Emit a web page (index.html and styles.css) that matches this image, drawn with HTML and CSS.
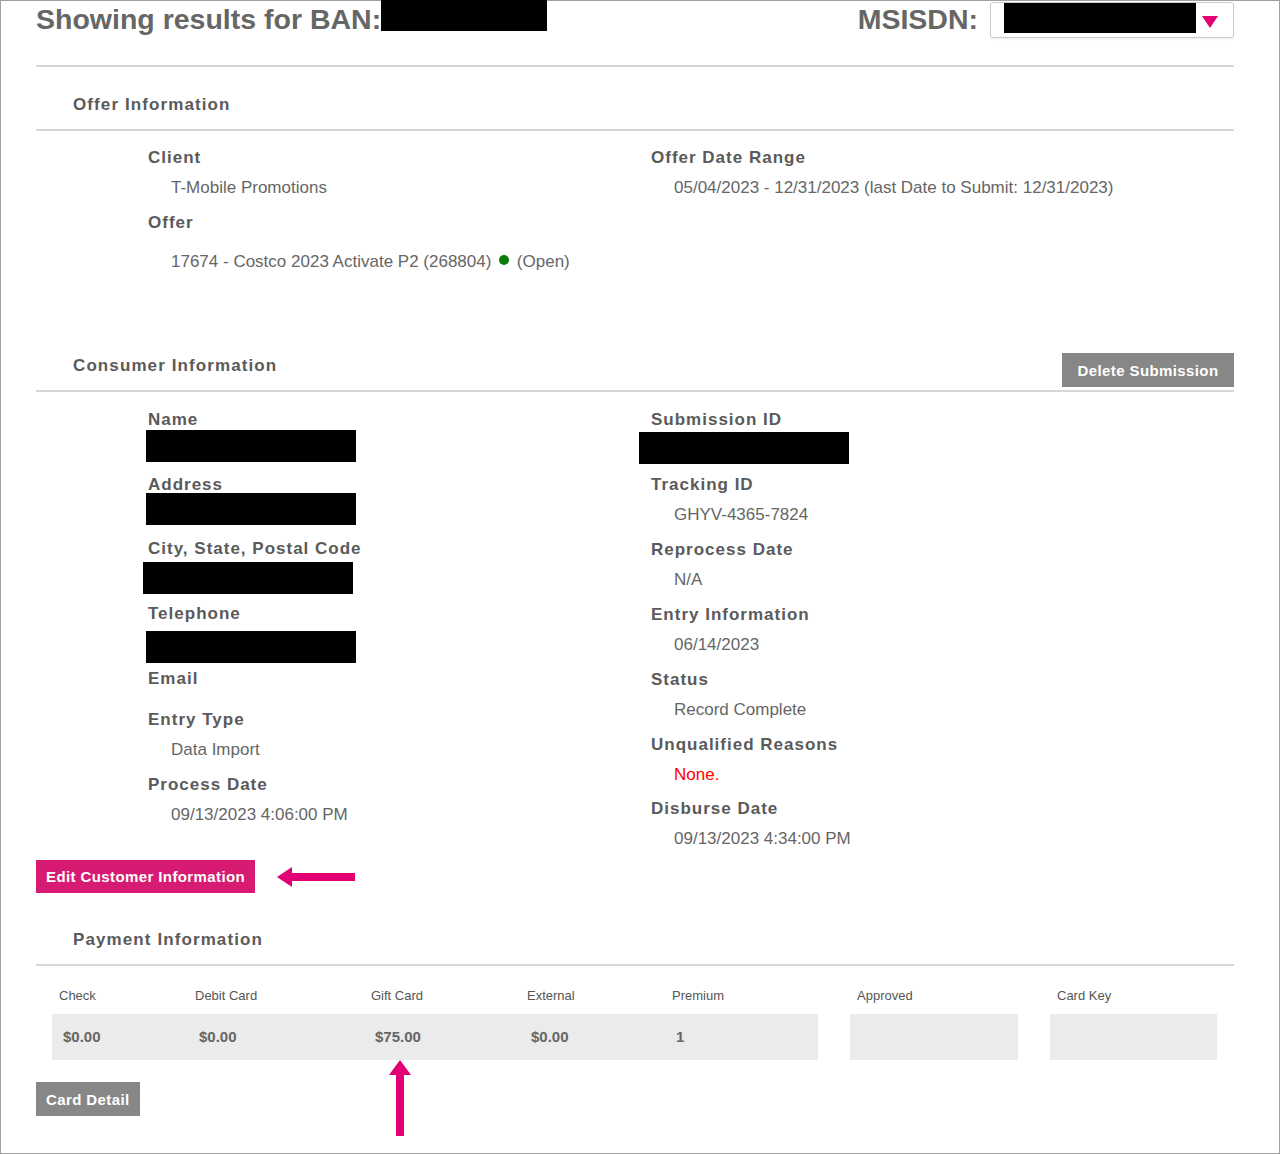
FILE: index.html
```html
<!DOCTYPE html>
<html lang="en">
<head>
    <meta charset="UTF-8">
    <meta name="viewport" content="width=device-width, initial-scale=1.0">
    <title>Submission Detail</title>
    <link rel="stylesheet" href="styles.css">
</head>
<body>

<div class="page">

    <div class="top">
        <div class="title">Showing results for BAN:<span class="redact redact-ban"></span></div>
        <div class="msisdn">
            MSISDN:
            <div class="select">
                <span class="redact redact-msisdn"></span>
                <svg class="caret" width="16" height="12" viewBox="0 0 16 12"><path d="M0 0 H16 L8 12 Z" fill="#e20074"/></svg>
            </div>
        </div>
    </div>

    <!-- Offer -->
    <div class="section-head">
        <div class="head-text">Offer Information</div>
    </div>
    <div class="fields offer-fields">
        <div class="col">
            <div class="field">
                <div class="label">Client</div>
                <div class="value">T-Mobile Promotions</div>
            </div>
            <div class="field">
                <div class="label">Offer</div>
                <div class="value value-tall">17674 - Costco 2023 Activate P2 (268804) <span class="dot"></span> (Open)</div>
            </div>
        </div>
        <div class="col">
            <div class="field">
                <div class="label">Offer Date Range</div>
                <div class="value">05/04/2023 - 12/31/2023 (last Date to Submit: 12/31/2023)</div>
            </div>
        </div>
    </div>

    <!-- Consumer -->
    <div class="section-head">
        <div class="head-text">Consumer Information</div>
        <button class="btn btn-gray btn-delete">Delete Submission</button>
    </div>
    <div class="fields consumer-fields">
        <div class="col">
            <div class="field">
                <div class="label">Name</div>
                <div class="redact redact-field"></div>
            </div>
            <div class="field">
                <div class="label">Address</div>
                <div class="redact redact-field redact-address"></div>
            </div>
            <div class="field">
                <div class="label">City, State, Postal Code</div>
                <div class="redact redact-field redact-city"></div>
            </div>
            <div class="field">
                <div class="label">Telephone</div>
                <div class="redact redact-field redact-phone"></div>
            </div>
            <div class="field field-empty">
                <div class="label">Email</div>
            </div>
            <div class="field">
                <div class="label">Entry Type</div>
                <div class="value">Data Import</div>
            </div>
            <div class="field">
                <div class="label">Process Date</div>
                <div class="value">09/13/2023 4:06:00 PM</div>
            </div>
        </div>
        <div class="col">
            <div class="field">
                <div class="label">Submission ID</div>
                <div class="redact redact-field redact-sub"></div>
            </div>
            <div class="field">
                <div class="label">Tracking ID</div>
                <div class="value">GHYV-4365-7824</div>
            </div>
            <div class="field">
                <div class="label">Reprocess Date</div>
                <div class="value">N/A</div>
            </div>
            <div class="field">
                <div class="label">Entry Information</div>
                <div class="value">06/14/2023</div>
            </div>
            <div class="field">
                <div class="label">Status</div>
                <div class="value">Record Complete</div>
            </div>
            <div class="field field-short">
                <div class="label">Unqualified Reasons</div>
                <div class="value value-red">None.</div>
            </div>
            <div class="field">
                <div class="label">Disburse Date</div>
                <div class="value">09/13/2023 4:34:00 PM</div>
            </div>
        </div>
    </div>

    <div class="edit-row">
        <button class="btn btn-pink">Edit Customer Information</button>
        <svg class="arrow-left" width="78" height="22" viewBox="0 0 78 22"><path d="M0 11 L15 1 V7 H78 V15 H15 V21 Z" fill="#e20074"/></svg>
    </div>

    <!-- Payment -->
    <div class="section-head">
        <div class="head-text">Payment Information</div>
    </div>
    <div class="pay-table">
        <div class="th">Check</div>
        <div class="th">Debit Card</div>
        <div class="th">Gift Card</div>
        <div class="th">External</div>
        <div class="th">Premium</div>
        <div class="th th-split">Approved</div>
        <div class="th th-split">Card Key</div>

        <div class="td">$0.00</div>
        <div class="td">$0.00</div>
        <div class="td">$75.00</div>
        <div class="td">$0.00</div>
        <div class="td">1</div>
        <div class="td td-split"></div>
        <div class="td td-split"></div>
    </div>

    <div class="card-row">
        <button class="btn btn-gray">Card Detail</button>
        <svg class="arrow-up" width="24" height="76" viewBox="0 0 24 76"><path d="M12 0 L23 15 H16 V76 H8 V15 H1 Z" fill="#e20074"/></svg>
    </div>

</div>

</body>
</html>
```

FILE: styles.css
```css
body {
    margin: 0;
    padding: 0;
    background-color: #fff;
    font-family: "Liberation Sans", Arial, sans-serif;
    color: #5a5a5a;
}
.page {
    box-sizing: border-box;
    width: 1280px;
    height: 1154px;
    border: 1px solid #a0a0a0;
    padding: 0 45px 0 35px;
    position: relative;
}

/* top bar */
.top {
    display: flex;
    justify-content: space-between;
    align-items: flex-start;
    height: 64px;
    border-bottom: 2px solid #d6d6d6;
}
.title, .msisdn {
    font-size: 28.5px;
    font-weight: bold;
    color: #666;
    line-height: 36px;
    display: flex;
    align-items: flex-start;
}
.redact {
    display: block;
    background-color: #000;
}
.redact-ban {
    width: 166px;
    height: 31px;
    margin-top: -1px;
}
.msisdn {
    gap: 12px;
}
.select {
    box-sizing: border-box;
    width: 244px;
    height: 36px;
    margin-top: 1px;
    border: 1px solid #ccc;
    border-radius: 3px;
    display: flex;
    align-items: flex-start;
    padding-left: 13px;
    box-shadow: 0 1px 2px rgba(0, 0, 0, 0.08);
}
.redact-msisdn {
    width: 192px;
    height: 30px;
    margin-top: 0;
}
.caret {
    margin: 13px 0 0 6px;
}

/* section headers */
.section-head {
    display: flex;
    justify-content: space-between;
    align-items: flex-end;
    border-bottom: 2px solid #d6d6d6;
    padding-left: 37px;
}
.head-text {
    font-size: 17px;
    font-weight: bold;
    letter-spacing: 1.1px;
    color: #5a5a5a;
    line-height: 20px;
    padding: 28px 0 14px;
}
.btn {
    border: none;
    color: #fff;
    font-family: "Liberation Sans", Arial, sans-serif;
    font-size: 15px;
    font-weight: bold;
    letter-spacing: 0.4px;
    height: 34px;
    padding: 0 10px;
    cursor: pointer;
}
.btn-gray {
    background-color: #878787;
}
.btn-pink {
    background-color: #d81b72;
    height: 33px;
}
.btn-delete {
    width: 172px;
    margin-bottom: 3px;
}

/* field columns */
.fields {
    display: grid;
    grid-template-columns: 503px 1fr;
    padding: 17px 0 0 112px;
}
.offer-fields {
    padding-bottom: 56px;
}
.consumer-fields {
    padding-top: 18px;
}
.field {
    margin-bottom: 15px;
}
.field-empty {
    margin-bottom: 21px;
}
.field-short {
    margin-bottom: 14px;
}
.col .field:last-child {
    margin-bottom: 11px;
}
.offer-fields .col .field:last-child {
    margin-bottom: 0;
}
.label {
    font-size: 17px;
    font-weight: bold;
    letter-spacing: 1px;
    line-height: 20px;
    color: #5a5a5a;
}
.value {
    font-size: 17px;
    line-height: 20px;
    color: #666;
    margin-top: 10px;
    padding-left: 23px;
}
.value-tall {
    margin-top: 19px;
}
.value-red {
    color: #f00;
}
.dot {
    display: inline-block;
    width: 10px;
    height: 10px;
    border-radius: 50%;
    background-color: #0a7a0a;
    margin: 0 3px;
    vertical-align: 2px;
}

/* blacked-out values */
.redact-field {
    width: 210px;
    height: 32px;
    margin-left: -2px;
    margin-bottom: -2px;
}
.redact-address {
    margin-top: -2px;
    margin-bottom: -1px;
}
.redact-city {
    margin-left: -5px;
    margin-top: 3px;
    margin-bottom: -5px;
}
.redact-phone {
    margin-top: 7px;
    margin-bottom: -9px;
}
.redact-sub {
    margin-left: -12px;
    margin-top: 2px;
    margin-bottom: -4px;
}

/* edit button row */
.edit-row {
    display: flex;
    align-items: center;
    gap: 22px;
    margin-bottom: 9px;
}
.arrow-left {
    display: block;
}

/* payment table */
.pay-table {
    display: grid;
    grid-template-columns: 136px 176px 156px 145px 153px 200px 199px;
    margin: 22px 0 0 16px;
}
.th {
    font-size: 13px;
    line-height: 16px;
    color: #555;
    padding: 0 0 10px 7px;
}
.td {
    background-color: #ebebeb;
    height: 46px;
    line-height: 46px;
    font-size: 15px;
    font-weight: bold;
    color: #666;
    padding-left: 11px;
}
.th-split, .td-split {
    margin-left: 32px;
}
.td-split {
    padding-left: 0;
}

/* card detail row */
.card-row {
    position: relative;
    margin-top: 22px;
}
.arrow-up {
    position: absolute;
    left: 352px;
    top: -22px;
}
```
